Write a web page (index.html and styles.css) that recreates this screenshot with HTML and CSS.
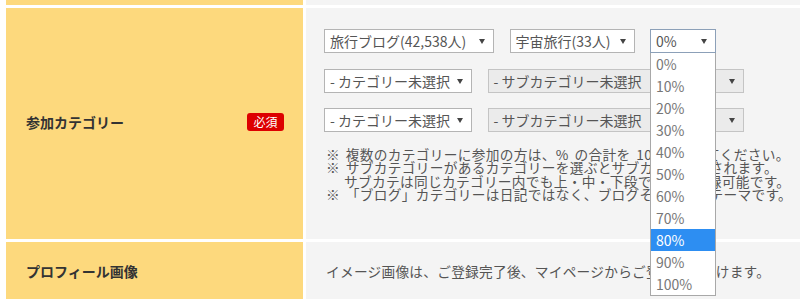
FILE: index.html
```html
<!DOCTYPE html>
<html lang="ja">
<head>
<meta charset="utf-8">
<title>参加カテゴリー</title>
<link rel="stylesheet" href="styles.css">
</head>
<body>
<div class="form">
  <div class="th th-prev"></div>
  <div class="td td-prev"></div>

  <div class="th">
    <span class="label">参加カテゴリー</span>
    <span class="badge">必須</span>
  </div>
  <div class="td td-cat">
    <div class="sel-row">
      <div class="sel w170"><span>旅行ブログ(42,538人)</span><i class="arrow"></i></div>
      <div class="sel w125"><span>宇宙旅行(33人)</span><i class="arrow"></i></div>
      <div class="sel-wrap">
        <div class="sel w66 focus"><span>0%</span><i class="arrow"></i></div>
        <ul class="options">
          <li>0%</li><li>10%</li><li>20%</li><li>30%</li><li>40%</li><li>50%</li>
          <li>60%</li><li>70%</li><li class="hl">80%</li><li>90%</li><li>100%</li>
        </ul>
      </div>
    </div>
    <div class="sel-row">
      <div class="sel w148"><span>- カテゴリー未選択</span><i class="arrow"></i></div>
      <div class="sel w256 disabled"><span>- サブカテゴリー未選択</span><i class="arrow"></i></div>
    </div>
    <div class="sel-row">
      <div class="sel w148"><span>- カテゴリー未選択</span><i class="arrow"></i></div>
      <div class="sel w256 disabled"><span>- サブカテゴリー未選択</span><i class="arrow"></i></div>
    </div>
    <div class="notes">
      <p>※ 複数のカテゴリーに参加の方は、% の合計を 100% にしてください。</p>
      <p>※ サブカテゴリーがあるカテゴリーを選ぶとサブカテが表示されます。</p>
      <p class="indent">サブカテは同じカテゴリー内でも上・中・下段で別々に登録可能です。</p>
      <p>※ 「ブログ」カテゴリーは日記ではなく、ブログそのもののテーマです。</p>
    </div>
  </div>

  <div class="th th-short">
    <span class="label">プロフィール画像</span>
  </div>
  <div class="td td-short">
    <p class="plain">イメージ画像は、ご登録完了後、マイページからご登録いただけます。</p>
  </div>
</div>
</body>
</html>
```

FILE: styles.css
```css
* { box-sizing: border-box; }
html, body { margin: 0; padding: 0; background: #ffffff; }
body {
  font-family: "Noto Sans CJK JP", "Noto Sans", sans-serif;
  color: #555;
  overflow: hidden;
}
.form {
  display: grid;
  grid-template-columns: 297px 1fr;
  grid-template-rows: 5px 231px 57px;
  gap: 3px;
  padding-left: 6px;
}
.th {
  background: #fdd97d;
  display: flex;
  align-items: center;
  justify-content: space-between;
  padding: 0 19px 0 20px;
}
.td { background: #f4f4f4; }
.label {
  font-size: 14px;
  font-weight: bold;
  color: #333;
  margin-top: -4px;
}
.th-short .label { margin-top: 0; }
.badge {
  width: 37px;
  height: 18px;
  background: #dd0000;
  color: #fff;
  border-radius: 3px;
  font-size: 12px;
  line-height: 18px;
  text-align: center;
  margin-top: -4px;
}
.td-cat { padding: 21px 18px 0 18px; }
.sel-row {
  display: flex;
  gap: 15.5px;
  margin-bottom: 15.5px;
  height: 24px;
}
.sel {
  position: relative;
  height: 24px;
  border: 1px solid #b4b4b4;
  background: #fff;
  font-size: 14px;
  line-height: 22px;
  padding-left: 5px;
  color: #555;
  white-space: nowrap;
}
.sel.disabled { background: #ebebeb; border-color: #c4c4c4; }
.sel.focus { border-color: #8ca0b8; }
.arrow {
  position: absolute;
  right: 8px;
  top: 9px;
  width: 0;
  height: 0;
  border-left: 3.5px solid transparent;
  border-right: 3.5px solid transparent;
  border-top: 5px solid #444;
}
.w170 { width: 170px; }
.w125 { width: 125px; }
.w66 { width: 66px; }
.w148 { width: 148px; }
.w256 { width: 256px; }
.sel-wrap { position: relative; }
.options {
  position: absolute;
  left: 0;
  top: 24px;
  width: 66px;
  margin: 0;
  padding: 0;
  list-style: none;
  background: #fff;
  border: 1px solid #a8a8a8;
  border-top: none;
  z-index: 5;
}
.options li {
  height: 22px;
  line-height: 22px;
  font-size: 14px;
  padding-left: 5px;
  color: #777;
}
.options li.hl { background: #2d8ef2; color: #fff; }
.notes {
  margin-top: 1px;
  padding-left: 2px;
  font-size: 13.7px;
  line-height: 13.6px;
  letter-spacing: 0.3px;
  word-spacing: 2.5px;
  color: #555;
  white-space: nowrap;
}
.notes p { margin: 0; }
.notes .indent { padding-left: 18px; }
.td-short {
  display: flex;
  align-items: center;
  padding-left: 20px;
}
.plain {
  margin: 0;
  font-size: 13.7px;
  letter-spacing: 0.25px;
  color: #555;
  white-space: nowrap;
}
```
